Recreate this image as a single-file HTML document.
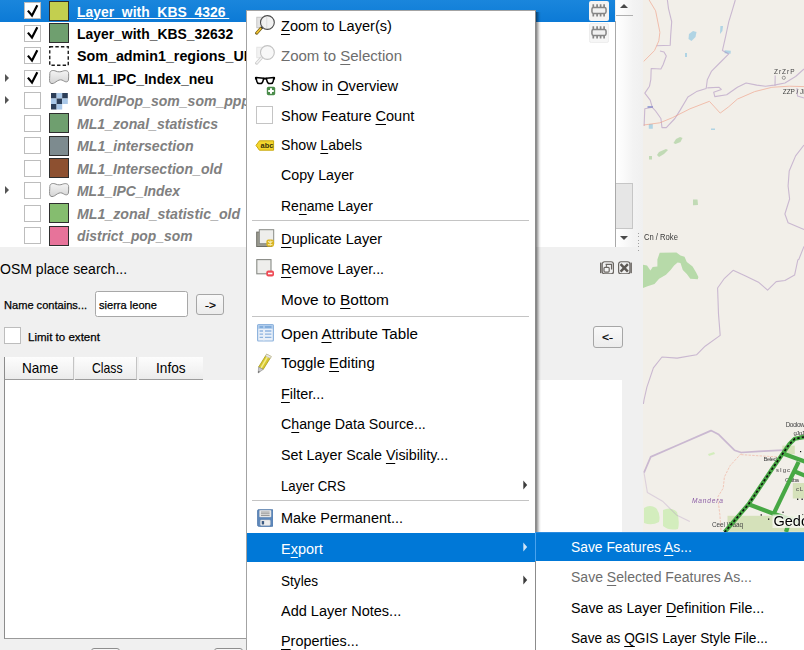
<!DOCTYPE html>
<html>
<head>
<meta charset="utf-8">
<title>QGIS</title>
<style>
*{box-sizing:border-box;margin:0;padding:0}
html,body{width:804px;height:650px;overflow:hidden;background:#f0f0f0;font-family:"Liberation Sans",sans-serif;color:#000}
#root{position:relative;width:804px;height:650px;overflow:hidden;background:#f0f0f0}
.abs{position:absolute}
#layers{position:absolute;left:0;top:0;width:615px;height:246.6px;background:#fff;overflow:hidden}
.selrow{position:absolute;left:0;top:0;width:615px;height:21.7px;background:linear-gradient(#1a86dc,#0c7ad6)}
.cb{position:absolute;left:24px;width:17px;height:17px;border:1.3px solid #bdbdbd;background:#fff}
.cb svg{position:absolute;left:-1.3px;top:-1.3px}
.sw{position:absolute;left:49px;width:20px;height:20px;border:1px solid #2e2e2e}
.tri{position:absolute;left:5px;width:0;height:0;border-left:4.8px solid #555;border-top:4.5px solid transparent;border-bottom:4.5px solid transparent}
.t{position:absolute;white-space:nowrap;transform-origin:0 50%}
.t u{text-decoration:underline;text-underline-offset:2.5px;text-decoration-thickness:1px}
.sep{position:absolute;height:1px;background:#c4c4c4}
.hl{position:absolute;background:#0078d7}
</style>
</head>
<body>
<div id="root">

<!-- ============ LAYERS PANEL ============ -->
<div id="layers">
<div class="selrow"></div>
<div class="cb" style="top:2.0px"><svg width="17" height="17" viewBox="0 0 17 17"><path d="M3.9 8.6 L8 13.6 L13.3 3.2" fill="none" stroke="#000" stroke-width="2.2"/></svg></div>
<div class="sw" style="top:0.7px;background:#c3cf4f"></div>
<div class="cb" style="top:24.5px"><svg width="17" height="17" viewBox="0 0 17 17"><path d="M3.9 8.6 L8 13.6 L13.3 3.2" fill="none" stroke="#000" stroke-width="2.2"/></svg></div>
<div class="sw" style="top:23.2px;background:#6f9f6f"></div>
<div class="cb" style="top:47.0px"><svg width="17" height="17" viewBox="0 0 17 17"><path d="M3.9 8.6 L8 13.6 L13.3 3.2" fill="none" stroke="#000" stroke-width="2.2"/></svg></div>
<svg class="abs" style="left:49px;top:45.9px" width="20" height="20"><rect x="0.75" y="0.75" width="18.5" height="18.5" fill="#fff" stroke="#1a1a1a" stroke-width="1.4" stroke-dasharray="3.4 2.2"/></svg>
<div class="tri" style="top:73.5px"></div>
<div class="cb" style="top:69.5px"><svg width="17" height="17" viewBox="0 0 17 17"><path d="M3.9 8.6 L8 13.6 L13.3 3.2" fill="none" stroke="#000" stroke-width="2.2"/></svg></div>
<svg class="abs" style="left:48px;top:69.0px" width="22" height="18" viewBox="0 0 22 18"><defs><linearGradient id="bg3" x1="0" y1="0" x2="0" y2="1"><stop offset="0" stop-color="#f4f4f4"/><stop offset="1" stop-color="#d4d4d4"/></linearGradient></defs><path d="M1.8 4.5 C1.8 1.5 5 0.8 8 2.2 C10 3.1 12.5 3 14.5 2.2 C17.5 1 20.6 1.6 20.6 4.5 C20.6 7 20.8 9 20.4 11 C20 13.4 17.5 13.2 15.5 11.8 C13.5 10.4 11.5 10.6 9.5 11.8 C7.5 13 6 14.6 4 14.6 C1.6 14.6 1.4 12 1.6 9.5 C1.75 7.5 1.8 6 1.8 4.5 Z" fill="url(#bg3)" stroke="#8c8c8c" stroke-width="1"/></svg>
<div class="tri" style="top:96.0px"></div>
<div class="cb" style="top:92.0px"></div>
<svg class="abs" style="left:51.2px;top:92.8px" width="17" height="17"><rect x="0.0" y="0.0" width="5.6" height="5.5" fill="#2c3e58"/><rect x="5.6" y="0.0" width="5.6" height="5.5" fill="#aac8e8"/><rect x="11.2" y="0.0" width="5.6" height="5.5" fill="#2c3e58"/><rect x="0.0" y="5.5" width="5.6" height="5.5" fill="#aac8e8"/><rect x="5.6" y="5.5" width="5.6" height="5.5" fill="#2c3e58"/><rect x="11.2" y="5.5" width="5.6" height="5.5" fill="#aac8e8"/><rect x="0.0" y="11.0" width="5.6" height="5.5" fill="#2c3e58"/><rect x="5.6" y="11.0" width="5.6" height="5.5" fill="#aac8e8"/></svg>
<div class="cb" style="top:114.5px"></div>
<div class="sw" style="top:113.2px;background:#6f9f6f"></div>
<div class="cb" style="top:137.0px"></div>
<div class="sw" style="top:135.7px;background:#7d8b8f"></div>
<div class="cb" style="top:159.5px"></div>
<div class="sw" style="top:158.2px;background:#8d5030"></div>
<div class="tri" style="top:186.0px"></div>
<div class="cb" style="top:182.0px"></div>
<svg class="abs" style="left:48px;top:181.5px" width="22" height="18" viewBox="0 0 22 18"><defs><linearGradient id="bg8" x1="0" y1="0" x2="0" y2="1"><stop offset="0" stop-color="#f4f4f4"/><stop offset="1" stop-color="#d4d4d4"/></linearGradient></defs><path d="M1.8 4.5 C1.8 1.5 5 0.8 8 2.2 C10 3.1 12.5 3 14.5 2.2 C17.5 1 20.6 1.6 20.6 4.5 C20.6 7 20.8 9 20.4 11 C20 13.4 17.5 13.2 15.5 11.8 C13.5 10.4 11.5 10.6 9.5 11.8 C7.5 13 6 14.6 4 14.6 C1.6 14.6 1.4 12 1.6 9.5 C1.75 7.5 1.8 6 1.8 4.5 Z" fill="url(#bg8)" stroke="#8c8c8c" stroke-width="1"/></svg>
<div class="cb" style="top:204.5px"></div>
<div class="sw" style="top:203.2px;background:#85bd6f"></div>
<div class="cb" style="top:227.0px"></div>
<div class="sw" style="top:225.7px;background:#e7739a"></div>
<div class="t" style="left:77.2px;top:2.13px;font-size:15.5px;line-height:19px;color:#fff;font-weight:bold;transform:scaleX(0.8971);text-decoration:underline;text-underline-offset:1px;">Layer_with_KBS_4326&nbsp;</div>
<div class="t" style="left:77.2px;top:23.93px;font-size:15.5px;line-height:19px;color:#000;font-weight:bold;transform:scaleX(0.8975);">Layer_with_KBS_32632</div>
<div class="t" style="left:77.2px;top:46.43px;font-size:15.5px;line-height:19px;color:#000;font-weight:bold;transform:scaleX(0.9215);">Som_admin1_regions_UNDP</div>
<div class="t" style="left:77.2px;top:68.93px;font-size:15.5px;line-height:19px;color:#000;font-weight:bold;transform:scaleX(0.9068);">ML1_IPC_Index_neu</div>
<div class="t" style="left:77.2px;top:91.43px;font-size:15.5px;line-height:19px;color:#808080;font-weight:bold;font-style:italic;transform:scaleX(0.9063);">WordlPop_som_som_ppp_2020</div>
<div class="t" style="left:77.2px;top:113.93px;font-size:15.5px;line-height:19px;color:#808080;font-weight:bold;font-style:italic;transform:scaleX(0.9100);">ML1_zonal_statistics</div>
<div class="t" style="left:77.2px;top:136.43px;font-size:15.5px;line-height:19px;color:#808080;font-weight:bold;font-style:italic;transform:scaleX(0.9146);">ML1_intersection</div>
<div class="t" style="left:77.2px;top:158.93px;font-size:15.5px;line-height:19px;color:#808080;font-weight:bold;font-style:italic;transform:scaleX(0.9106);">ML1_Intersection_old</div>
<div class="t" style="left:77.2px;top:181.43px;font-size:15.5px;line-height:19px;color:#808080;font-weight:bold;font-style:italic;transform:scaleX(0.8999);">ML1_IPC_Index</div>
<div class="t" style="left:77.2px;top:203.93px;font-size:15.5px;line-height:19px;color:#808080;font-weight:bold;font-style:italic;transform:scaleX(0.9153);">ML1_zonal_statistic_old</div>
<div class="t" style="left:77.2px;top:226.43px;font-size:15.5px;line-height:19px;color:#808080;font-weight:bold;font-style:italic;transform:scaleX(0.8939);">district_pop_som</div>
<!-- memory layer indicator icons -->
<svg class="abs" style="left:589px;top:.8px" width="20" height="20" viewBox="0 0 20 20"><rect x="0" y="0" width="20" height="20" rx="2" fill="#f4f3f2"/><g stroke="#858585" fill="none"><path d="M4.3 3.2v3M8.1 3.2v3M11.6 3.2v3M15.1 3.2v3M4.3 12.6v3M8.1 12.6v3M11.6 12.6v3M15.1 12.6v3" stroke-width="1.7"/><rect x="2.95" y="6.45" width="14.1" height="6" rx="1.6" fill="#f1f1f1" stroke-width="1.5"/></g></svg>
<svg class="abs" style="left:589px;top:23.2px" width="20" height="20" viewBox="0 0 20 20"><rect x=".4" y=".4" width="19.2" height="19.2" rx="2" fill="#f6f6f6" stroke="#e9e9e9" stroke-width=".8"/><g stroke="#858585" fill="none"><path d="M4.3 3.2v3M8.1 3.2v3M11.6 3.2v3M15.1 3.2v3M4.3 12.6v3M8.1 12.6v3M11.6 12.6v3M15.1 12.6v3" stroke-width="1.7"/><rect x="2.95" y="6.45" width="14.1" height="6" rx="1.6" fill="#f1f1f1" stroke-width="1.5"/></g></svg>
</div>

<!-- scrollbar -->
<div class="abs" style="left:615px;top:21.4px;width:1px;height:225.2px;background:#a9a9a9"></div>
<div class="abs" style="left:616px;top:0;width:27px;height:246.6px;background:linear-gradient(90deg,#fff,#fafafa 30%,#f3f3f3 63%,#f0f0f0)"></div>
<div class="abs" style="left:616px;top:15px;width:17px;height:1px;background:#b0b0b0"></div>
<div class="abs" style="left:619.8px;top:4.4px;width:0;height:0;border-bottom:4.7px solid #4a4a4a;border-left:4.8px solid transparent;border-right:4.8px solid transparent"></div>
<div class="abs" style="left:616px;top:182.5px;width:17px;height:46.5px;background:#e6e6e6;border:1px solid #c6c6c6;border-left:none"></div>
<div class="abs" style="left:619.8px;top:236px;width:0;height:0;border-top:4.7px solid #4a4a4a;border-left:4.8px solid transparent;border-right:4.8px solid transparent"></div>
<!-- splitter dots -->
<div class="abs" style="left:638px;top:232.5px;width:1px;height:20px;background:repeating-linear-gradient(#a0a0a0 0 1px,transparent 1px 3.3px)"></div>

<!-- ============ OSM PLACE SEARCH PANEL ============ -->
<!-- float / close buttons -->
<svg class="abs" style="left:600px;top:260.6px" width="14.2" height="13.6" viewBox="0 0 14.2 13.6"><rect x="2.2" y=".75" width="11.3" height="12.2" rx="2.4" fill="none" stroke="#6a6662" stroke-width="1.2"/><rect x="0" y="1.6" width="1.5" height="10.6" fill="#6a6662"/><path d="M5.6 3.3 H11.6 V8.4" fill="none" stroke="#6a6662" stroke-width="1.3"/><rect x="4" y="6.3" width="5.2" height="4.8" rx="1" fill="#f3f3f3" stroke="#6a6662" stroke-width="1.2"/><path d="M6.4 3.4 V6" stroke="#6a6662" stroke-width="1"/></svg>
<svg class="abs" style="left:618.2px;top:260.6px" width="14.2" height="13.6" viewBox="0 0 14.2 13.6"><rect x=".6" y=".75" width="11.3" height="12.2" rx="2.4" fill="none" stroke="#6a6662" stroke-width="1.2"/><rect x="12.4" y="1.6" width="1.5" height="10.6" fill="#6a6662"/><path d="M2.6 3.2 L9.9 10.6 M9.9 3.2 L2.6 10.6" stroke="#5d5955" stroke-width="2.5"/></svg>
<!-- input -->
<div class="abs" style="left:95px;top:291.2px;width:93px;height:26px;background:#fff;border:1px solid #a8a8a8;border-radius:2.5px"></div>
<!-- -> button -->
<div class="abs" style="left:195.8px;top:293.5px;width:28.6px;height:21.3px;background:linear-gradient(#f9f9f9,#ececec);border:1px solid #a6a6a6;border-radius:3px"></div>
<!-- <- button -->
<div class="abs" style="left:593.2px;top:326.2px;width:29.5px;height:21.5px;background:linear-gradient(#f9f9f9,#ececec);border:1px solid #a6a6a6;border-radius:3px"></div>
<!-- limit to extent checkbox -->
<div class="abs" style="left:4.4px;top:327.3px;width:16.6px;height:16.6px;background:#fff;border:1.3px solid #bdbdbd"></div>
<!-- table -->
<div class="abs" style="left:4.2px;top:380.4px;width:617.8px;height:258.2px;background:#fff;border-left:1px solid #8c8c8c;border-bottom:1px solid #9a9a9a"></div>
<div class="abs" style="left:4.2px;top:356.6px;width:69.6px;height:23.8px;background:linear-gradient(#fdfdfd,#f4f4f4 55%,#ebebeb);border-left:1px solid #8c8c8c;border-right:1px solid #c4c4c4;border-bottom:1px solid #9c9c9c"></div>
<div class="abs" style="left:75px;top:356.8px;width:62.2px;height:23.6px;background:linear-gradient(#fdfdfd,#f4f4f4 55%,#ebebeb);border-right:1px solid #c4c4c4;border-bottom:1px solid #9c9c9c"></div>
<div class="abs" style="left:138.7px;top:356.8px;width:64px;height:23.6px;background:linear-gradient(#fdfdfd,#f4f4f4 55%,#ebebeb);border-bottom:1px solid #9c9c9c"></div>
<!-- bottom buttons (only tops visible) -->
<div class="abs" style="left:90.7px;top:647.6px;width:29.2px;height:20px;background:#f6f6f6;border:1px solid #8e8e8e;border-radius:3px"></div>
<div class="abs" style="left:214.2px;top:647.6px;width:29.2px;height:20px;background:#f6f6f6;border:1px solid #8e8e8e;border-radius:3px"></div>

<!-- ============ MAP CANVAS ============ -->
<svg id="map" class="abs" style="left:643px;top:0" width="161" height="650" viewBox="643 0 161 650">
<defs><filter id="bl" x="-5%" y="-5%" width="110%" height="110%"><feGaussianBlur stdDeviation="0.7"/></filter></defs>
<rect x="643" y="0" width="161" height="650" fill="#f2efe9"/>
<g filter="url(#bl)">
<!-- vegetation -->
<g fill="#add19e">
<path fill="#b7daa9" d="M643 264.8 L647 265.4 L650.4 270.6 L652.7 267.1 L657.4 266.6 L657.4 259.6 L659.7 252.7 L676.4 252.5 L680.5 255.6 L684.5 256.8 L686.8 262 L692.6 266.6 L696 272.3 L698.4 277 L697.8 279.3 L690.3 278.7 L686.8 274.1 L682.8 270 L680.5 263.1 L677.6 262.5 L674.1 265.4 L670.6 270 L666 274.7 L659.1 278.7 L654.5 283.9 L647.5 286.2 L643 287.9 Z"/>
<path opacity=".7" d="M676 139 l4 -2 l2.5 1 l-2 4 l-5 2 l-2 -1z M659 152 l7 -3 l2 1 l-4 4 l-5 3 l-2 -2z M649 156 l3 0 l0 3.5 l-3 0z M693 199.5 l4.5 0 l.5 5.5 l-5 .2z"/>
</g>

<g fill="#d3edbd">
<path d="M644 508 q6 -4 12 0 q5 6 3 14 q-7 4 -15 1z M663 510 q8 -4 14 2 q3 9 1 17 q-9 2 -15 -3z M708 454 l6 -2 l1 2 l-6 2z"/>
</g>
<g fill="#d5e1ba">
<rect x="727.5" y="515.8" width="77" height="16"/><rect x="782.3" y="445.6" width="12.5" height="8.6"/><rect x="792.8" y="483" width="12" height="15.5"/>
</g>
<!-- water -->
<g fill="#a5cfe3" opacity=".85">
<path d="M689 34 l4 -3 l3.5 1 l-1 5 l-4 4 l-3 -2z M720.4 26 l2.6 0 l-.6 5 l-2.4 3z M724.6 50.3 l6.2 .4 l-.2 3 l-6 -.4z M648.8 124 l4 0 l0 4.8 l-4 0z M685 53 l2 0 l0 4 l-2 0z M711 128.6 l4 0 l0 1.4 l-4 0z"/>
</g>
<path d="M647.5 106 l5.5 0 l0 2 l-5.5 0z" fill="#9aa6d6"/>
<!-- admin boundaries (purple) -->
<g fill="none" stroke="#a98bbd" stroke-width="1.1" stroke-linejoin="round" opacity=".55">
<path d="M667.4 0 L668.5 8.6 L671.7 21.6 L670.6 36.6 L670.2 45.3 L656.6 45.7"/>
<path d="M660 51 L664 52 L666.3 56 L663.1 64.7 L660.9 69 L651.2 68.5 L650.8 79.7 L649.5 86.2 L644.8 93.1 L650.2 100.2 L652.3 107.3 L644.8 108.8 L644.1 126"/>
<path d="M735.3 0 L732.1 10.8 L728.8 21.6 L725.6 36.6 L722.4 50.6 L728.8 53.9 L720.2 62.5 L711.6 71.1 L707.3 79.7 L706.2 88.4 L696.5 91.6 L687.9 97 L680.3 109.9 L674.9 118.5 L666.3 127.6 L662 127.6 L660.9 118.5 L655.6 111 L652.3 107.3"/>
<path d="M707.3 87.9 L719.1 87.3 L721.3 89.4 L713.7 92.2 L714.8 96.6 L726.7 94.8 L737.4 87.3 L746.1 83 L756.8 85.1 L765.5 86.2 L774.1 85.1 L784.9 83 L795.6 76.5 L804 69"/>
<path d="M775.2 75.4 L775 86"/>
<path d="M797 88 L797.5 96 L804 98"/>
<path d="M804 145 L795.6 155.9 L789.2 171 L788.1 186 L789.6 199 L784.9 214 L788.1 222.7 L804 229.6"/>
<path d="M804 246.4 L798.9 259.3 L797.8 260 L794.6 275.1 L784.9 280.5 L776.2 281.6 L767.6 290.2 L759 282.6 L746.1 276.2 L733.1 270.3 L724.5 278.3 L717.6 288 L718.5 313.9 L720.2 335.4 L705.1 346.2 L696.5 354.8 L677.1 358.1 L662 357 L653.4 367.8 L646.9 387.2 L644 400 L643.4 404"/>
<path d="M644 472.6 L650.7 456.9 L678.6 444.7 L711 430.6 L718.8 434.6 L734.4 450.2 L741.1 452.5 L758.9 451.4 L783.5 450.2" stroke-width="1.7"/>
<path d="M644 472.6 L647.4 492.6 L663 501.6 L676.4 514.9 L689.8 521.6" opacity=".55"/>
</g>
<!-- roads (orange / salmon) -->
<g fill="none" stroke="#f0957a" stroke-width="1" stroke-linejoin="round" opacity=".55">
<path d="M649.1 0 L655.6 10.8 L659.9 32.3 L658.8 40.9 L654.5 50.6 L643.7 61.4"/>
<path d="M643.7 125 L659.9 122.8 L672.8 117.5 L690 108.8 L709.4 101.3 L720.2 113.1 L728.8 106.7 L737.4 99.1 L754.7 91.6 L771.9 87.3 L789.2 86.2 L804 86.6"/>
<path d="M741.1 453.6 L729.9 465.9 L724.4 477 L723.2 488.2 L717.7 497.1 L719.9 514.9 L721 531" stroke-dasharray="2.5 1.2" opacity=".8"/>
<path d="M741.1 454.6 L758.9 455.8 L776.8 456.9" stroke-dasharray="2.5 1.2" opacity=".8"/>
</g>
</g>
<!-- tiny place labels -->
<g font-family="Liberation Sans" fill="#444" filter="url(#bl)">
<text x="774" y="74.3" font-size="6.5" textLength="20.5">ZrZrP</text>
<circle cx="783.8" cy="77.8" r="1.6" fill="none" stroke="#666" stroke-width=".6"/>
<text x="782.7" y="93.7" font-size="6.5" textLength="22">ZZP / Ji</text>
<text x="643.9" y="240" font-size="9.6" textLength="34" lengthAdjust="spacingAndGlyphs" fill="#3a3a3a">Cn / Roke</text>
<text x="692" y="502.6" font-size="6.6" font-style="italic" fill="#8d5ea6" textLength="31">Mandera</text>
<text x="712" y="527" font-size="6.4" textLength="31">Ceel Waaq</text>
<text x="785.7" y="426.6" font-size="6.4" textLength="19">Doolow</text>
<text x="793.5" y="434.6" font-size="6" textLength="11">gJgJ</text>
<text x="763.4" y="461.4" font-size="6" textLength="13.5">Beled</text>
<text x="776" y="471.6" font-size="6" textLength="14">sIgc</text>
<text x="785" y="481.5" font-size="6.2" textLength="14">Garba</text>
<text x="796" y="490.5" font-size="6" textLength="7">cL</text>
</g>
<!-- region polygon outlines (green) + selected layer dotted outline -->
<g fill="none" stroke="#47a844" stroke-width="4.2" stroke-linejoin="round">
<path d="M724.6 532.2 L748.6 504.2 L771.7 469.6 L789 444.6 L794.8 438.8 L804.5 436.9"/>
<path d="M748.6 504.2 L773.6 513.8 L805 524"/>
<path d="M773.6 513.8 L798.6 461.9"/>
<path d="M782.3 453.3 L805 461.6"/>
<path d="M794.8 471.5 L805 475.6"/>
<path d="M788.5 524 L786 532"/>
</g>
<path d="M724.6 532.2 L748.6 504.2 L771.7 469.6 L789 444.6 L794.8 438.8 L804.5 436.9" fill="none" stroke="#111" stroke-width="1.7" stroke-dasharray="2.4 2.2"/>
<g fill="#111"><rect x="760.6" y="514.3" width="1.3" height="1.3"/><rect x="768" y="518.5" width="1.3" height="1.3"/><rect x="782.4" y="511.6" width="1.3" height="1.3"/><rect x="797" y="498.6" width="1.3" height="1.3"/><rect x="801.5" y="498.6" width="1.3" height="1.3"/><rect x="802" y="514" width="1.3" height="1.3"/><rect x="800" y="451" width="1.2" height="1.2"/></g>
<!-- label halo -->
<rect x="772.5" y="514.5" width="32" height="13.5" fill="#f2f4ea" opacity=".8"/>
</svg>

<div class="t" style="left:773.5px;top:512.68px;font-size:14.5px;line-height:17px;color:#000;text-shadow:0 0 2px #fff,0 0 2px #fff,0 0 3px #fff;">Gedo</div>

<!-- ============ CONTEXT MENU ============ -->
<div class="abs" style="left:536px;top:12px;width:4.5px;height:520.3px;background:linear-gradient(90deg,rgba(0,0,0,.5),rgba(0,0,0,.28) 35%,rgba(0,0,0,.08) 70%,rgba(0,0,0,0))"></div>
<div class="abs" style="left:246px;top:10px;width:290px;height:642px;background:#fff;border:1px solid #a3a3a3;border-right:1px solid #8c8c8c"></div>
<div class="hl" style="left:247px;top:533.2px;width:289px;height:29.2px"></div>
<div class="sep" style="left:252px;top:220px;width:277px"></div>
<div class="sep" style="left:252px;top:315.5px;width:277px"></div>
<div class="sep" style="left:252px;top:500px;width:277px"></div>
<!-- menu icons -->
<!-- zoom to layer -->
<svg class="abs" style="left:255px;top:14px" width="21" height="21" viewBox="0 0 21 21"><rect x="1.8" y="3.2" width="6" height="10.6" fill="#e4e4e4" stroke="#bdbdbd" stroke-width=".8"/><path d="M6.2 14 L1.6 19.2" stroke="#6b5a18" stroke-width="3" stroke-linecap="round"/><path d="M6.2 14 L1.9 18.9" stroke="#f0c030" stroke-width="1.7" stroke-linecap="round"/><path d="M8.3 12.2 L6.4 14.2" stroke="#333" stroke-width="2"/><circle cx="12.4" cy="8.5" r="6.9" fill="#f1f1f1" fill-opacity=".93" stroke="#4a4a4a" stroke-width="1.1"/><path d="M11.8 2.6 L11.8 14.2" stroke="#dcdcdc" stroke-width="1"/></svg>
<!-- zoom to selection (disabled) -->
<svg class="abs" style="left:255px;top:44px;opacity:.45" width="21" height="21" viewBox="0 0 21 21"><rect x="1.8" y="3.2" width="6" height="10.6" fill="#e4e4e4" stroke="#bdbdbd" stroke-width=".8"/><path d="M6.2 14 L1.6 19.2" stroke="#8b8b8b" stroke-width="3" stroke-linecap="round"/><path d="M6.2 14 L1.9 18.9" stroke="#e0e0e0" stroke-width="1.7" stroke-linecap="round"/><circle cx="12.4" cy="8.5" r="6.9" fill="#f1f1f1" stroke="#7a7a7a" stroke-width="1.1"/></svg>
<!-- show in overview (glasses + plus) -->
<svg class="abs" style="left:254px;top:75px" width="22" height="21" viewBox="0 0 22 21"><g fill="#fff" stroke="#000" stroke-width="1.5" stroke-linejoin="round"><path d="M2 2.5 L9.7 3.2 L9 6 Q8.4 8.5 6.6 8.5 L5 8.5 Q3.2 8.5 2.8 6.4 Z"/><path d="M20 2.5 L12.3 3.2 L13 6 Q13.6 8.5 15.4 8.5 L17 8.5 Q18.8 8.5 19.2 6.4 Z"/></g><path d="M9.4 3.6 L12.6 3.6" stroke="#000" stroke-width="2"/><path d="M1.5 2 V4.6 M20.5 2 V4.6" stroke="#000" stroke-width="1.1"/><rect x="12.8" y="11.8" width="8.4" height="8.4" rx="1.6" fill="#4a8c4a"/><path d="M17 13.2v5.6M14.2 16h5.6" stroke="#fff" stroke-width="2"/></svg>
<!-- show feature count checkbox -->
<div class="abs" style="left:255.8px;top:106.3px;width:17.5px;height:17.4px;background:#fff;border:1.3px solid #c4c4c4"></div>
<!-- show labels -->
<svg class="abs" style="left:255px;top:139.5px" width="20" height="11" viewBox="0 0 20 11"><path d="M1 5.4 L4.4 .8 L18.6 .8 L18.6 10.2 L4.4 10.2 Z" fill="#f3d62e" stroke="#c9a80e" stroke-width="1" stroke-linejoin="round"/><text x="5.6" y="8.2" font-family="Liberation Sans" font-size="7.4" font-weight="bold" fill="#3a3208">abc</text></svg>
<!-- duplicate layer -->
<svg class="abs" style="left:256px;top:229px" width="19" height="19" viewBox="0 0 19 19"><rect x=".7" y="3.1" width="15" height="14.4" fill="#9b9b90" stroke="#6e6e66" stroke-width="1"/><rect x="3.3" y=".7" width="14.4" height="14" fill="#eeeeec" stroke="#888a85" stroke-width="1"/><rect x="10.4" y="10.6" width="7.6" height="7.2" rx="2" fill="#d9b420"/><path d="M12 12.2 L16.4 16.2 M16.4 12.2 L12 16.2 M14.2 11.6 V16.8" stroke="#f7ecb0" stroke-width="1.1"/></svg>
<!-- remove layer -->
<svg class="abs" style="left:256px;top:259px" width="19" height="19" viewBox="0 0 19 19"><rect x=".8" y=".6" width="14.2" height="14.2" fill="#eeeeec" stroke="#888a85" stroke-width="1.1"/><rect x="10.3" y="11.5" width="7.7" height="6" rx="2" fill="#ef4a55"/><path d="M12 14.5 h4.4" stroke="#fff" stroke-width="1.6"/></svg>
<!-- attribute table -->
<svg class="abs" style="left:256.5px;top:324.2px" width="17" height="18" viewBox="0 0 17 18"><rect x=".6" y=".6" width="15.8" height="16.4" rx="1" fill="#e9f0f9" stroke="#8fb4de" stroke-width="1.2"/><rect x="1.2" y="1.2" width="14.6" height="3.6" fill="#a9c8ea"/><path d="M2.6 3 h3.4 M8 3 h6.4" stroke="#5b8fcb" stroke-width="1.2"/><path d="M2.6 7 h3.4 M8 7 h6.4 M2.6 10.2 h3.4 M8 10.2 h6.4 M2.6 13.4 h3.4 M8 13.4 h6.4" stroke="#8db3df" stroke-width="1.3"/><path d="M6.9 5 V16.6" stroke="#e6edf6" stroke-width="1"/></svg>
<!-- toggle editing pencil -->
<svg class="abs" style="left:256px;top:352px" width="18" height="22" viewBox="0 0 18 22"><path d="M10.6 2.2 L15.2 4.6 L7.2 17.4 L2.6 15 Z" fill="#d9c92f" stroke="#a89a1c" stroke-width=".8"/><path d="M12.4 3.2 L5 16.2" stroke="#f3eb8c" stroke-width="1.5"/><path d="M10.6 2.2 L15.2 4.6 L14.2 6.3 L9.6 3.9 Z" fill="#ececec" stroke="#bcbcbc" stroke-width=".6"/><path d="M2.6 15 L7.2 17.4 L2.2 21 Z" fill="#c9c9c9" stroke="#909090" stroke-width=".6"/><path d="M2.4 19 L3.8 19.8 L2.2 21Z" fill="#555"/></svg>
<!-- make permanent (save) -->
<svg class="abs" style="left:256.6px;top:508.5px" width="16.8" height="18.1" viewBox="0 0 17 19" preserveAspectRatio="none"><rect x=".4" y=".4" width="16.2" height="18" rx="2" fill="#5d87ba" stroke="#4f78aa" stroke-width=".8"/><rect x="2.6" y="1.4" width="11.6" height="7" rx=".6" fill="#ececec" stroke="#d4d4d4" stroke-width=".5"/><path d="M4 3.2 h8.8 M4 5 h8.8 M4 6.8 h8.8" stroke="#8a8a8a" stroke-width=".9"/><rect x="3.4" y="11.6" width="10" height="5.6" rx=".8" fill="#ededed" stroke="#cfcfcf" stroke-width=".5"/><rect x="4.8" y="12.6" width="2.4" height="3.6" rx=".6" fill="#3b5a82"/></svg>

<!-- submenu arrows -->
<svg class="abs" style="left:523.4px;top:479.8px" width="5" height="10"><path d="M0.3 0.6 L4.2 5 L0.3 9.4Z" fill="#3c3c3c"/></svg>
<svg class="abs" style="left:523.4px;top:542.3px" width="5" height="10"><path d="M0.3 0.6 L4.2 5 L0.3 9.4Z" fill="#cfe4f7"/></svg>
<svg class="abs" style="left:523.4px;top:575px" width="5" height="10"><path d="M0.3 0.6 L4.2 5 L0.3 9.4Z" fill="#3c3c3c"/></svg>

<!-- ============ SUBMENU ============ -->
<div class="abs" style="left:535.2px;top:532px;width:270px;height:120px;background:#fff;border-left:1px solid #8c8c8c;border-top:1px solid #a3a3a3"></div>
<div class="hl" style="left:535px;top:532.3px;width:269px;height:29.2px;border-left:1px solid #4aa3ee;border-top:1px solid #2a8be0"></div>

<div class="t" style="left:281.2px;top:16.13px;font-size:15.5px;line-height:19px;color:#000;transform:scaleX(0.9397);"><u>Z</u>oom to Layer(s)</div>
<div class="t" style="left:281.2px;top:46.13px;font-size:15.5px;line-height:19px;color:#6d6d6d;transform:scaleX(0.9684);">Zoom to <u>S</u>election</div>
<div class="t" style="left:281.2px;top:75.73px;font-size:15.5px;line-height:19px;color:#000;transform:scaleX(0.9447);">Show in <u>O</u>verview</div>
<div class="t" style="left:281.2px;top:105.53px;font-size:15.5px;line-height:19px;color:#000;transform:scaleX(0.9375);">Show Feature <u>C</u>ount</div>
<div class="t" style="left:281.2px;top:135.43px;font-size:15.5px;line-height:19px;color:#000;transform:scaleX(0.9124);">Show <u>L</u>abels</div>
<div class="t" style="left:281.2px;top:165.23px;font-size:15.5px;line-height:19px;color:#000;transform:scaleX(0.9184);">Copy Layer</div>
<div class="t" style="left:281.2px;top:195.63px;font-size:15.5px;line-height:19px;color:#000;transform:scaleX(0.9028);">Re<u>n</u>ame Layer</div>
<div class="t" style="left:281.2px;top:228.73px;font-size:15.5px;line-height:19px;color:#000;transform:scaleX(0.9395);"><u>D</u>uplicate Layer</div>
<div class="t" style="left:281.2px;top:259.13px;font-size:15.5px;line-height:19px;color:#000;transform:scaleX(0.9125);"><u>R</u>emove Layer...</div>
<div class="t" style="left:281.2px;top:290.13px;font-size:15.5px;line-height:19px;color:#000;transform:scaleX(0.9939);">Move to <u>B</u>ottom</div>
<div class="t" style="left:281.2px;top:323.73px;font-size:15.5px;line-height:19px;color:#000;transform:scaleX(0.9773);">Open <u>A</u>ttribute Table</div>
<div class="t" style="left:281.2px;top:353.13px;font-size:15.5px;line-height:19px;color:#000;transform:scaleX(0.9621);">Toggle <u>E</u>diting</div>
<div class="t" style="left:281.2px;top:384.23px;font-size:15.5px;line-height:19px;color:#000;transform:scaleX(0.9309);"><u>F</u>ilter...</div>
<div class="t" style="left:281.2px;top:414.13px;font-size:15.5px;line-height:19px;color:#000;transform:scaleX(0.9182);">C<u>h</u>ange Data Source...</div>
<div class="t" style="left:281.2px;top:445.13px;font-size:15.5px;line-height:19px;color:#000;transform:scaleX(0.9226);">Set Layer Scale <u>V</u>isibility...</div>
<div class="t" style="left:281.2px;top:475.73px;font-size:15.5px;line-height:19px;color:#000;transform:scaleX(0.8521);">Layer CRS</div>
<div class="t" style="left:281.2px;top:508.13px;font-size:15.5px;line-height:19px;color:#000;transform:scaleX(0.9316);">Make Permanent...</div>
<div class="t" style="left:281.2px;top:538.73px;font-size:15.5px;line-height:19px;color:#fff;transform:scaleX(0.9328);">E<u>x</u>port</div>
<div class="t" style="left:281.2px;top:571.13px;font-size:15.5px;line-height:19px;color:#000;transform:scaleX(0.8764);">Styles</div>
<div class="t" style="left:281.2px;top:600.93px;font-size:15.5px;line-height:19px;color:#000;transform:scaleX(0.9363);">Add Layer Notes...</div>
<div class="t" style="left:281.2px;top:630.73px;font-size:15.5px;line-height:19px;color:#000;transform:scaleX(0.9297);"><u>P</u>roperties...</div>
<div class="t" style="left:570.5px;top:537.43px;font-size:15.5px;line-height:19px;color:#fff;transform:scaleX(0.8930);">Save Features <u>A</u>s...</div>
<div class="t" style="left:570.5px;top:567.33px;font-size:15.5px;line-height:19px;color:#6d6d6d;transform:scaleX(0.9049);">Save <u>S</u>elected Features As...</div>
<div class="t" style="left:570.5px;top:597.63px;font-size:15.5px;line-height:19px;color:#000;transform:scaleX(0.9189);">Save as Layer <u>D</u>efinition File...</div>
<div class="t" style="left:570.5px;top:627.53px;font-size:15.5px;line-height:19px;color:#000;transform:scaleX(0.8820);">Save as <u>Q</u>GIS Layer Style File...</div>
<div class="t" style="left:-0.5px;top:259.43px;font-size:15.5px;line-height:19px;color:#000;transform:scaleX(0.9051);">OSM place search...</div>
<div class="t" style="left:3.7px;top:298.99px;font-size:11px;line-height:13px;color:#000;transform:scaleX(1.0067);-webkit-text-stroke:0.25px #000;">Name contains...</div>
<div class="t" style="left:98.6px;top:298.99px;font-size:11px;line-height:13px;color:#000;transform:scaleX(1.0072);-webkit-text-stroke:0.25px #000;">sierra leone</div>
<div class="t" style="left:27.6px;top:330.79px;font-size:11px;line-height:13px;color:#000;transform:scaleX(1.0499);-webkit-text-stroke:0.25px #000;">Limit to extent</div>
<div class="t" style="left:204.5px;top:298.69px;font-size:11px;line-height:13px;color:#000;transform:scaleX(1.0898);-webkit-text-stroke:0.25px #000;">-&gt;</div>
<div class="t" style="left:602.3px;top:331.29px;font-size:11px;line-height:13px;color:#000;transform:scaleX(1.0898);-webkit-text-stroke:0.25px #000;">&lt;-</div>
<div class="t" style="left:22.0px;top:360.38px;font-size:14.5px;line-height:17px;color:#000;transform:scaleX(0.9357);">Name</div>
<div class="t" style="left:91.6px;top:360.38px;font-size:14.5px;line-height:17px;color:#000;transform:scaleX(0.8438);">Class</div>
<div class="t" style="left:156.0px;top:360.38px;font-size:14.5px;line-height:17px;color:#000;transform:scaleX(0.9416);">Infos</div>

</div>
</body>
</html>
